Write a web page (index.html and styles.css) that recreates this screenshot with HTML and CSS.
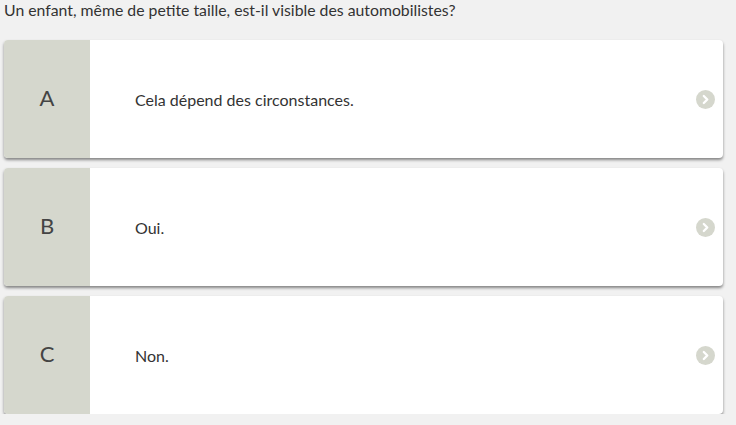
FILE: index.html
```
<!DOCTYPE html>
<html lang="fr">
<head>
<meta charset="utf-8">
<link rel="stylesheet" href="styles.css">
</head>
<body>
<div class="page">
  <p class="question">Un enfant, même de petite taille, est-il visible des automobilistes?</p>
  <div class="answers">
    <div class="card">
      <div class="letter">A</div>
      <div class="text">Cela dépend des circonstances.</div>
      <span class="go"><svg viewBox="0 0 19 19" width="19" height="19"><circle cx="9.5" cy="9.5" r="9.5" fill="#d5d7cd"/><path d="M7.8 6 L11.3 9.5 L7.8 13" fill="none" stroke="#fff" stroke-width="2.3" stroke-linecap="round" stroke-linejoin="round"/></svg></span>
    </div>
    <div class="card">
      <div class="letter">B</div>
      <div class="text">Oui.</div>
      <span class="go"><svg viewBox="0 0 19 19" width="19" height="19"><circle cx="9.5" cy="9.5" r="9.5" fill="#d5d7cd"/><path d="M7.8 6 L11.3 9.5 L7.8 13" fill="none" stroke="#fff" stroke-width="2.3" stroke-linecap="round" stroke-linejoin="round"/></svg></span>
    </div>
    <div class="card">
      <div class="letter">C</div>
      <div class="text">Non.</div>
      <span class="go"><svg viewBox="0 0 19 19" width="19" height="19"><circle cx="9.5" cy="9.5" r="9.5" fill="#d5d7cd"/><path d="M7.8 6 L11.3 9.5 L7.8 13" fill="none" stroke="#fff" stroke-width="2.3" stroke-linecap="round" stroke-linejoin="round"/></svg></span>
    </div>
  </div>
</div>
</body>
</html>
```
FILE: styles.css
```
html, body {
  margin: 0;
  padding: 0;
  background: #f1f1f1;
}
body {
  font-family: Lato, "Open Sans", sans-serif;
  color: #333;
}
.page {
  padding: 0 13px 0 4px;
}
.question {
  margin: 0;
  font-size: 15.8px;
  line-height: 20px;
  height: 40px;
  color: #333;
}
.answers {
  display: flex;
  flex-direction: column;
  gap: 10px;
}
.card {
  display: flex;
  align-items: center;
  height: 118px;
  background: #fff;
  border-radius: 4px;
  overflow: hidden;
  box-shadow: 0 2px 3px rgba(0, 0, 0, 0.45);
}
.letter {
  width: 86px;
  align-self: stretch;
  display: flex;
  align-items: center;
  justify-content: center;
  padding-bottom: 3px;
  box-sizing: border-box;
  background: #d5d7cd;
  font-size: 22px;
  color: #444;
}
.text {
  flex: 1;
  padding-left: 45px;
  font-size: 16px;
  color: #333;
}
.go {
  display: flex;
  margin-right: 8px;
}
```
